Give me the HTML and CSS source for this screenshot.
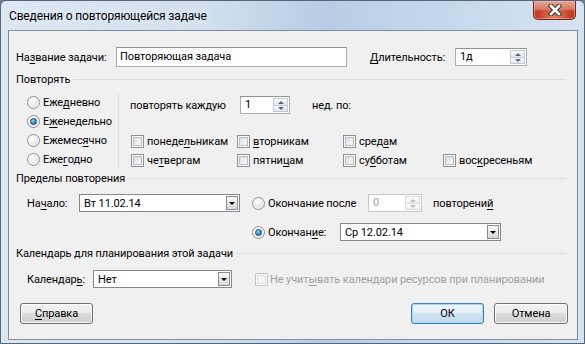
FILE: index.html
```html
<!DOCTYPE html>
<html lang="ru">
<head>
    <meta charset="UTF-8">
    <title>Сведения о повторяющейся задаче</title>
    <link rel="stylesheet" href="styles.css">
</head>
<body>
    <div class="window">
        <div class="titlebar">
            <span class="title">Сведения о повторяющейся задаче</span>
            <div class="close-btn">
                <svg width="14" height="12" viewBox="0 0 14 12">
                    <path d="M3 2 L11 10 M11 2 L3 10" stroke="#3a3a3a" stroke-width="4.6" stroke-linecap="square"/>
                    <path d="M3 2 L11 10 M11 2 L3 10" stroke="#ffffff" stroke-width="2.6" stroke-linecap="square"/>
                </svg>
            </div>
        </div>
        <div class="client">
            <div class="row name-row">
                <span class="lbl lbl-name">На<u>з</u>вание задачи:</span>
                <div class="textbox tb-name">Повторяющая задача</div>
                <span class="lbl lbl-dur"><u>Д</u>лительность:</span>
                <div class="spin spin-dur">
                    <span class="spin-val">1д</span>
                    <span class="spin-btns"><i class="up"></i><i class="down"></i></span>
                </div>
            </div>

            <div class="group-head">Повторять</div>
            <div class="repeat">
                <div class="radio-col">
                    <div class="opt"><span class="radio"></span>Еже<u>д</u>невно</div>
                    <div class="opt"><span class="radio checked"></span>Е<u>ж</u>енедельно</div>
                    <div class="opt"><span class="radio"></span>Ежемес<u>я</u>чно</div>
                    <div class="opt"><span class="radio"></span>Еже<u>г</u>одно</div>
                </div>
                <div class="vsep"></div>
                <div class="repeat-right">
                    <div class="row every-row">
                        <span class="lbl lbl-every">повторять каждую</span>
                        <div class="spin spin-every">
                            <span class="spin-val">1</span>
                            <span class="spin-btns"><i class="up"></i><i class="down"></i></span>
                        </div>
                        <span class="lbl lbl-week">нед. по:</span>
                    </div>
                    <div class="days">
                        <div class="opt"><span class="check"></span>понеде<u>л</u>ьникам</div>
                        <div class="opt"><span class="check"></span><u>в</u>торникам</div>
                        <div class="opt"><span class="check"></span>сред<u>а</u>м</div>
                        <div class="opt"></div>
                        <div class="opt"><span class="check"></span>че<u>т</u>вергам</div>
                        <div class="opt"><span class="check"></span>пятни<u>ц</u>ам</div>
                        <div class="opt"><span class="check"></span>су<u>б</u>ботам</div>
                        <div class="opt"><span class="check"></span>вос<u>к</u>ресеньям</div>
                    </div>
                </div>
            </div>

            <div class="group-head">Пределы повторения</div>
            <div class="row limit-row">
                <span class="lbl lbl-start">На<u>ч</u>ало:</span>
                <div class="combo combo-date">
                    <span class="combo-val">Вт 11.02.14</span>
                    <span class="drop"></span>
                </div>
                <span class="radio end-radio"></span>
                <span class="lbl lbl-after">Окончание после</span>
                <div class="spin spin-count disabled">
                    <span class="spin-val">0</span>
                    <span class="spin-btns"><i class="up"></i><i class="down"></i></span>
                </div>
                <span class="lbl lbl-times">повторени<u>й</u></span>
            </div>
            <div class="row end-row">
                <span class="radio checked"></span>
                <span class="lbl lbl-end">Окончан<u>и</u>е:</span>
                <div class="combo combo-date">
                    <span class="combo-val">Ср 12.02.14</span>
                    <span class="drop"></span>
                </div>
            </div>

            <div class="group-head">Календарь для планирования этой задачи</div>
            <div class="row cal-row">
                <span class="lbl lbl-cal">Календар<u>ь</u>:</span>
                <div class="combo combo-cal">
                    <span class="combo-val">Нет</span>
                    <span class="drop"></span>
                </div>
                <span class="check disabled"></span>
                <span class="lbl lbl-ignore">Не учит<u>ы</u>вать календари ресурсов при планировании</span>
            </div>

            <div class="buttons">
                <div class="btn btn-help"><u>С</u>правка</div>
                <div class="btn-group">
                    <div class="btn btn-default">ОК</div>
                    <div class="btn btn-cancel">Отмена</div>
                </div>
            </div>
        </div>
    </div>
</body>
</html>
```

FILE: styles.css
```css
body {
    margin: 0;
    background-color: #6f7c8a;
    font-family: 'Roboto', 'Noto Sans', sans-serif;
    font-size: 11px;
    letter-spacing: -0.1px;
    color: #000;
}
u {
    text-decoration: underline;
    text-underline-offset: 2px;
}
.window {
    width: 585px;
    height: 344px;
    box-sizing: border-box;
    border: 1px solid #56667a;
    border-radius: 6px 6px 0 0;
    padding: 0 6px 3px 7px;
    background: linear-gradient(90deg, #dce7f3 0%, #d2e0ee 35%, #b7cde5 55%, #c4d7ec 75%, #d6e4f2 100%);
}

/* title bar */
.titlebar {
    height: 29px;
    display: flex;
    justify-content: space-between;
    align-items: flex-start;
}
.title {
    margin: 7px 0 0 1px;
    font-size: 12px;
    letter-spacing: -0.15px;
    line-height: 16px;
    text-shadow: 0 0 8px rgba(255, 255, 255, 0.9);
}
.close-btn {
    width: 43px;
    height: 19px;
    margin-right: 2px;
    box-sizing: border-box;
    border: 1px solid #6e2a22;
    border-top: none;
    border-radius: 0 0 5px 5px;
    background: radial-gradient(ellipse at 50% 100%, #e9866a 0%, rgba(233, 134, 106, 0) 60%),
                linear-gradient(#e4a793 0%, #d67b66 45%, #c5412c 55%, #b8361f 100%);
    box-shadow: inset 0 0 0 1px rgba(255, 200, 180, 0.45);
    display: flex;
    justify-content: center;
    align-items: center;
}

/* client area */
.client {
    height: 310px;
    box-sizing: border-box;
    border: 1px solid #7f8fa3;
    background-color: #f0f0f0;
    padding: 16px 9px 0 7px;
}
.row {
    display: flex;
    align-items: center;
}
.lbl {
    white-space: nowrap;
    flex-shrink: 0;
}

.name-row {
    height: 20px;
}
.lbl-name {
    width: 100px;
}
.textbox {
    height: 20px;
    box-sizing: border-box;
    border: 1px solid #abadb3;
    border-top-color: #8f939a;
    background-color: #fff;
    padding: 0 3px;
    line-height: 18px;
}
.tb-name {
    width: 231px;
}
.lbl-dur {
    width: 85px;
    margin-left: 23px;
}

/* spin box */
.spin {
    height: 18px;
    box-sizing: border-box;
    border: 1px solid #abadb3;
    border-top-color: #8f939a;
    background-color: #fff;
    display: flex;
    padding: 1px;
}
.spin-val {
    flex: 1;
    padding-left: 3px;
    line-height: 14px;
}
.spin-btns {
    width: 15px;
    display: flex;
    flex-direction: column;
}
.spin-btns i {
    flex: 1;
    box-sizing: border-box;
    border: 1px solid #c3c9d1;
    background: linear-gradient(#fbfbfb, #e2e6ea);
    position: relative;
}
.spin-btns i + i {
    border-top: none;
}
.spin-btns i::after {
    content: "";
    position: absolute;
    left: 4px;
    top: 2px;
    border-left: 3px solid transparent;
    border-right: 3px solid transparent;
}
.spin-btns .up::after {
    border-bottom: 3px solid #52698c;
}
.spin-btns .down::after {
    top: 1px;
    border-top: 3px solid #52698c;
}
.spin-dur {
    width: 72px;
}
.spin-every {
    width: 50px;
}
.spin-count {
    width: 54px;
}
.spin.disabled {
    border-color: #c5c9cf;
    color: #a0a0a0;
}
.spin.disabled .spin-btns i {
    border-color: #d8dcdf;
    background: linear-gradient(#fdfdfd, #eef0f2);
}
.spin.disabled .spin-btns .up::after {
    border-bottom-color: #b4bcc6;
}
.spin.disabled .spin-btns .down::after {
    border-top-color: #b4bcc6;
}

/* group headers */
.group-head {
    height: 13px;
    line-height: 13px;
    display: flex;
    align-items: center;
    margin-right: 2px;
    white-space: nowrap;
}
.group-head::after {
    content: "";
    flex: 1;
    height: 1px;
    margin-left: 3px;
    background-color: #d5dfe5;
}
.name-row + .group-head {
    margin-top: 6px;
}

/* repeat section */
.repeat {
    display: flex;
    margin-top: 7px;
    height: 76px;
}
.radio-col {
    width: 91px;
    padding-left: 11px;
}
.opt {
    height: 19px;
    display: flex;
    align-items: center;
    white-space: nowrap;
}
.radio {
    width: 13px;
    height: 13px;
    box-sizing: border-box;
    border-radius: 50%;
    border: 1px solid #8c8f94;
    background: radial-gradient(circle at 40% 35%, #ffffff 0%, #f0f0f0 35%, #cfd3d8 100%);
    box-shadow: inset 0 0 0 1px rgba(255, 255, 255, 0.7);
    margin-right: 3px;
    flex-shrink: 0;
    display: flex;
    justify-content: center;
    align-items: center;
}
.radio.checked::after {
    content: "";
    width: 5px;
    height: 5px;
    border-radius: 50%;
    border: 1px solid #1c4a6e;
    background: radial-gradient(circle at 40% 35%, #9ad6f6 0%, #3a8ccb 55%, #17558a 100%);
}
.vsep {
    width: 1px;
    height: 75px;
    margin-top: 1px;
    background-color: #d5dfe5;
}
.repeat-right {
    padding: 3px 0 0 11px;
}
.every-row {
    height: 18px;
}
.lbl-every {
    width: 110px;
}
.lbl-week {
    margin-left: 22px;
}
.days {
    display: grid;
    grid-template-columns: 106px 106px 100px auto;
    margin: 18px 0 0 1px;
}
.check {
    width: 13px;
    height: 13px;
    box-sizing: border-box;
    border: 1px solid #8e8f8f;
    background: linear-gradient(135deg, #d5d8dc 0%, #eef0f2 60%, #fbfbfb 100%);
    box-shadow: inset 0 0 0 1px #fff, inset 0 0 0 2px #b8bcc2;
    margin-right: 3px;
    flex-shrink: 0;
}
.check.disabled {
    border-color: #c4c4c4;
    background: #f4f4f4;
    box-shadow: inset 0 0 0 1px #fff, inset 0 0 0 2px #dedede;
}

/* limits section */
.group-head + .limit-row {
    margin-top: 9px;
}
.repeat + .group-head {
    margin-top: 3px;
}
.limit-row, .end-row, .cal-row {
    height: 18px;
}
.lbl-start {
    width: 52px;
    margin-left: 11px;
}
.combo {
    height: 18px;
    box-sizing: border-box;
    border: 1px solid #828790;
    background-color: #fff;
    display: flex;
    align-items: center;
    padding: 1px;
}
.combo-val {
    flex: 1;
    padding-left: 3px;
}
.drop {
    width: 12px;
    height: 14px;
    box-sizing: border-box;
    border: 1px solid #8c8c8c;
    background: linear-gradient(#f6f6f6, #d9d9d9);
    display: flex;
    justify-content: center;
    align-items: center;
}
.drop::after {
    content: "";
    border-left: 3px solid transparent;
    border-right: 3px solid transparent;
    border-top: 3px solid #000;
}
.combo-date {
    width: 161px;
}
.end-radio {
    margin-left: 12px;
}
.lbl-after {
    width: 100px;
}
.lbl-times {
    margin-left: 11px;
}
.end-row {
    margin: 11px 0 0 236px;
}
.lbl-end {
    width: 72px;
}
.end-row + .group-head {
    margin-top: 6px;
}

/* calendar section */
.cal-row {
    margin-top: 10px;
}
.lbl-cal {
    width: 66px;
    margin-left: 11px;
}
.combo-cal {
    width: 139px;
}
.cal-row .check {
    margin-left: 23px;
    margin-right: 2px;
}
.lbl-ignore {
    color: #a0a0a0;
}

/* buttons */
.buttons {
    margin: 15px 0 0 4px;
    display: flex;
    justify-content: space-between;
}
.btn-group {
    display: flex;
    gap: 10px;
}
.btn {
    width: 73px;
    height: 21px;
    box-sizing: border-box;
    border: 1px solid #707070;
    border-radius: 3px;
    background: linear-gradient(#f2f2f2 0%, #ebebeb 50%, #dddddd 50%, #cfcfcf 100%);
    box-shadow: inset 0 0 0 1px rgba(255, 255, 255, 0.8);
    text-align: center;
    line-height: 19px;
}
.btn-default {
    border-color: #3c7fb1;
    background: linear-gradient(#eef5fa 0%, #e2eef7 50%, #cfe3f2 50%, #c3dcee 100%);
    box-shadow: inset 0 0 0 1px #a9d8f5;
}
.btn-cancel {
    width: 74px;
}
```
